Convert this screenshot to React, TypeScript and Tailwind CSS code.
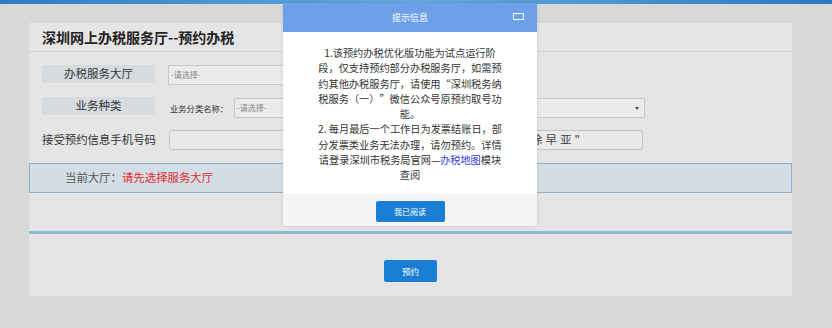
const font = { fontFamily: '"Noto Sans CJK SC", "Noto Sans", sans-serif' };

export default function App() {
  return (
    <div
      className="relative w-[832px] h-[328px] overflow-hidden bg-[#d7d8d8] text-[#333] [text-spacing-trim:space-all]"
      style={font}
    >
      <div className="h-[4px] bg-gradient-to-r from-[#2d7bc2] via-[#63aee0] to-[#2a78bf]" />

      {/* main panel */}
      <div className="ml-[29px] mt-[19px] w-[763px] h-[273px] bg-[#e5e5e5] flex flex-col">
        <div className="h-[29px] border-b border-[#d3d3d3] pl-[13px] flex items-center">
          <h1 className="text-[14px] font-bold text-[#222] leading-none">深圳网上办税服务厅--预约办税</h1>
        </div>

        <div className="pt-[13px] pl-[13px] flex flex-col">
          <div className="flex items-start h-[20px]">
            <div className="w-[113px] h-[18px] bg-[#d6dbe0] flex items-center justify-center text-[11.5px] leading-none">
              办税服务大厅
            </div>
            <div className="ml-[13px] w-[260px] h-[20px] border border-[#c8c8c8] bg-[#ebebeb] flex items-center pl-[2px] text-[8px] text-[#888]">
              -请选择-
            </div>
          </div>

          <div className="flex items-start h-[21px] mt-[12px]">
            <div className="w-[113px] h-[18px] bg-[#d6dbe0] flex items-center justify-center text-[11.5px] leading-none">
              业务种类
            </div>
            <div className="ml-[15px] mt-[1px] flex items-center h-[20px]">
              <span className="text-[8.3px] text-[#333] w-[64px]">业务分类名称：</span>
              <div className="w-[411px] h-[20px] border border-[#c8c8c8] bg-[#ebebeb] flex items-center justify-between pl-[2px] pr-[5px] text-[8px] text-[#888]">
                <span>-请选择-</span>
                <span className="w-0 h-0 border-l-[2.5px] border-r-[2.5px] border-t-[3px] border-l-transparent border-r-transparent border-t-[#444]" />
              </div>
            </div>
          </div>

          <div className="flex items-center h-[20px] mt-[12px]">
            <div className="w-[114px] text-[11.4px] leading-none whitespace-nowrap">接受预约信息手机号码</div>
            <div className="ml-[13px] w-[474px] h-[20px] rounded-[3px] border border-[#c4c4c4] bg-[#e9e9e9] flex items-center text-[11.5px] text-[#444]">
              <span className="ml-[361px] tracking-[3px] whitespace-nowrap">徐早亚"</span>
            </div>
          </div>
        </div>

        <div className="mt-[13px] h-[30px] border border-[#8fb2c6] bg-[#d2dde5] flex items-center pl-[35px] text-[11.4px]">
          <span className="text-[#555]">当前大厅：</span>
          <span className="text-[#e42a2a]">请先选择服务大厅</span>
        </div>

        <div className="mt-[38px] h-[3px] bg-[#8fbccc]" />

        <div className="flex justify-center mt-[26px]">
          <button className="w-[53px] h-[22px] rounded-[2px] bg-[#1a7fd4] text-white text-[8.5px]">预约</button>
        </div>
      </div>

      {/* dialog */}
      <div className="absolute left-[283px] top-[3px] w-[254px] shadow-[0_0_4px_rgba(0,0,0,0.12)]">
        <div className="h-[29px] bg-[#6ca1ea] flex items-center justify-center relative">
          <span className="text-white text-[9px]">提示信息</span>
          <span className="absolute right-[13px] top-[10px] w-[11px] h-[7px] border-[1.5px] border-white" />
        </div>
        <div className="bg-white h-[162px] pt-[13px] text-center text-[10.2px] leading-[15.3px] text-[#333]">
          1.该预约办税优化版功能为试点运行阶<br />
          段，仅支持预约部分办税服务厅，如需预<br />
          约其他办税服务厅，请使用“深圳税务纳<br />
          税服务（一）”微信公众号原预约取号功<br />
          能。<br />
          2. 每月最后一个工作日为发票结账日，部<br />
          分发票类业务无法办理，请勿预约。详情<br />
          请登录深圳市税务局官网—<span className="text-[#3a3ad6]">办税地图</span>模块<br />
          查阅
        </div>
        <div className="h-[32px] bg-[#f5f5f5] flex justify-center pt-[7px]">
          <button className="w-[69px] h-[21px] rounded-[2px] bg-[#1a7fd4] text-white text-[8px]">我已阅读</button>
        </div>
      </div>
    </div>
  );
}
